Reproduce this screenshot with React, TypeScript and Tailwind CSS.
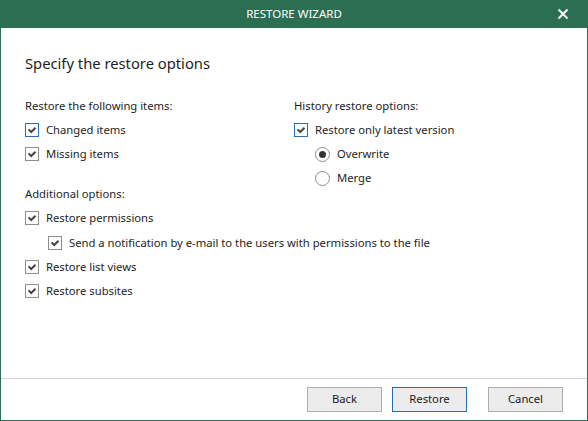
import React from "react";

const Check: React.FC<{ focused?: boolean }> = ({ focused }) => (
  <span
    className={`flex h-[14px] w-[14px] shrink-0 items-center justify-center border bg-white ${
      focused ? "border-[#2a6fb5]" : "border-[#8f8f8f]"
    }`}
  >
    <svg width="10" height="8" viewBox="0 0 10 8" fill="none">
      <path d="M1.5 3.4 L4.2 6 L8.5 1.7" stroke="#454545" strokeWidth="2" />
    </svg>
  </span>
);

const Radio: React.FC<{ on?: boolean }> = ({ on }) => (
  <span className="flex h-[15px] w-[15px] shrink-0 items-center justify-center rounded-full border border-[#8f8f8f] bg-white">
    {on && <span className="h-[7px] w-[7px] rounded-full bg-[#333]" />}
  </span>
);

const CheckRow: React.FC<{ label: string; focused?: boolean; indent?: boolean }> = ({
  label,
  focused,
  indent,
}) => (
  <div className={`flex h-[24px] items-center gap-[7px] ${indent ? "pl-[23px]" : ""}`}>
    <Check focused={focused} />
    <span>{label}</span>
  </div>
);

const RadioRow: React.FC<{ label: string; on?: boolean }> = ({ label, on }) => (
  <div className="flex h-[24px] items-center gap-[7px] pl-[21px]">
    <Radio on={on} />
    <span>{label}</span>
  </div>
);

const Button: React.FC<{ label: string; primary?: boolean; className?: string }> = ({
  label,
  primary,
  className = "",
}) => (
  <button
    className={`h-[25px] w-[75px] border bg-[#ececec] text-[11.25px] text-[#1a1a1a] ${
      primary ? "border-[#2a6fb5]" : "border-[#adadad]"
    } ${className}`}
  >
    {label}
  </button>
);

export default function App() {
  return (
    <div
      className="flex h-[421px] w-[588px] flex-col bg-white text-[11.25px] text-[#1e1e1e]"
      style={{ fontFamily: '"Noto Sans", "Open Sans", sans-serif' }}
    >
      {/* title bar */}
      <div className="relative flex h-[28px] shrink-0 items-center justify-center bg-[#2b6e51] text-white">
        <span className="text-[11.5px]">RESTORE WIZARD</span>
        <svg
          className="absolute right-[19px] top-[8px]"
          width="12"
          height="12"
          viewBox="0 0 12 12"
        >
          <path d="M1.5 1.5 L10.5 10.5 M10.5 1.5 L1.5 10.5" stroke="white" strokeWidth="2" />
        </svg>
      </div>

      <div className="flex flex-1 flex-col border-x border-b border-[#2b6e51]">
        <div className="flex-1 px-[24px] pt-[24px]">
          <h1 className="text-[14.75px] leading-[22px]">Specify the restore options</h1>

          {/* top options: right column runs past the left one */}
          <div className="mt-[20px] flex h-[88px] items-start">
            <div className="w-[269px]">
              <div className="flex h-[24px] items-center">Restore the following items:</div>
              <CheckRow label="Changed items" focused />
              <CheckRow label="Missing items" />
            </div>
            <div>
              <div className="flex h-[24px] items-center">History restore options:</div>
              <CheckRow label="Restore only latest version" focused />
              <RadioRow label="Overwrite" on />
              <RadioRow label="Merge" />
            </div>
          </div>

          <div>
            <div className="flex h-[24px] items-center">Additional options:</div>
            <CheckRow label="Restore permissions" />
            <div className="pt-[1px]">
              <CheckRow
                label="Send a notification by e-mail to the users with permissions to the file"
                indent
              />
            </div>
            <CheckRow label="Restore list views" />
            <CheckRow label="Restore subsites" />
          </div>
        </div>

        <div className="flex h-[42px] shrink-0 items-start justify-end gap-[10px] border-t border-[#d2d2d2] pr-[24px] pt-[8px]">
          <Button label="Back" />
          <Button label="Restore" primary />
          <Button label="Cancel" className="ml-[11px]" />
        </div>
      </div>
    </div>
  );
}
